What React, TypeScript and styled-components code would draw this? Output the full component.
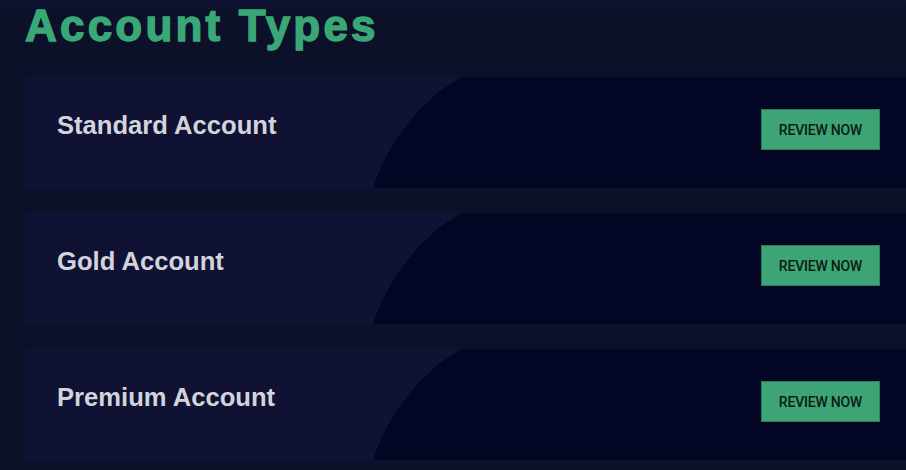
import React from 'react';
import styled, { createGlobalStyle } from 'styled-components';

/* -------------------------------------------------------------------------- */
/* Global                                                                     */
/* -------------------------------------------------------------------------- */

const GlobalStyle = createGlobalStyle`
  html, body {
    margin: 0;
    padding: 0;
    background: #0c1029;
    overflow: hidden;
  }
  body {
    font-family: "Liberation Sans", Arial, sans-serif;
  }
`;

/* -------------------------------------------------------------------------- */
/* Styled Components                                                          */
/* -------------------------------------------------------------------------- */

const Page = styled.main`
  width: 906px;
  height: 470px;
  box-sizing: border-box;
  padding: 4px 0 0 25px;
  background: linear-gradient(#101433 0, #0c1029 12px);
  display: flex;
  flex-direction: column;
`;

const Heading = styled.h1`
  margin: 0 0 29px;
  font-size: 44px;
  line-height: 44px;
  font-weight: 700;
  letter-spacing: 3.2px;
  color: #3aa876;
  -webkit-text-stroke: 1.4px #3aa876;
`;

const CardList = styled.section`
  display: flex;
  flex-direction: column;
  gap: 25px;
`;

const Card = styled.article`
  position: relative;
  height: 111px;
  box-sizing: border-box;
  padding: 32px 26px 0 32px;
  background: #020524;
  display: flex;
  justify-content: space-between;
  align-items: flex-start;
  overflow: hidden;

  /* lighter left panel with the curved edge */
  &::before {
    content: '';
    position: absolute;
    inset: 0 auto 0 0;
    width: 440px;
    background: #0f1233;
    clip-path: path('M0 0 H437 C400 20 365 60 348 111 H0 Z');
  }
`;

const CardTitle = styled.h2`
  position: relative;
  margin: 2px 0 0;
  font-size: 25.6px;
  font-weight: 700;
  color: #d3d3dc;
`;

const ReviewButton = styled.button`
  position: relative;
  width: 119px;
  height: 41px;
  padding: 0;
  background: #3da575;
  border: 1px solid #2f7f5a;
  color: #0c1a15;
  font-family: Roboto, "Liberation Sans", sans-serif;
  font-size: 14px;
  font-weight: 500;
  letter-spacing: -0.2px;
  cursor: pointer;
`;

/* -------------------------------------------------------------------------- */
/* Component                                                                  */
/* -------------------------------------------------------------------------- */

const accounts = ['Standard Account', 'Gold Account', 'Premium Account'];

export default function App() {
  return (
    <>
      <GlobalStyle />
      <Page>
        <Heading>Account Types</Heading>
        <CardList>
          {accounts.map((name) => (
            <Card key={name}>
              <CardTitle>{name}</CardTitle>
              <ReviewButton>REVIEW NOW</ReviewButton>
            </Card>
          ))}
        </CardList>
      </Page>
    </>
  );
}
